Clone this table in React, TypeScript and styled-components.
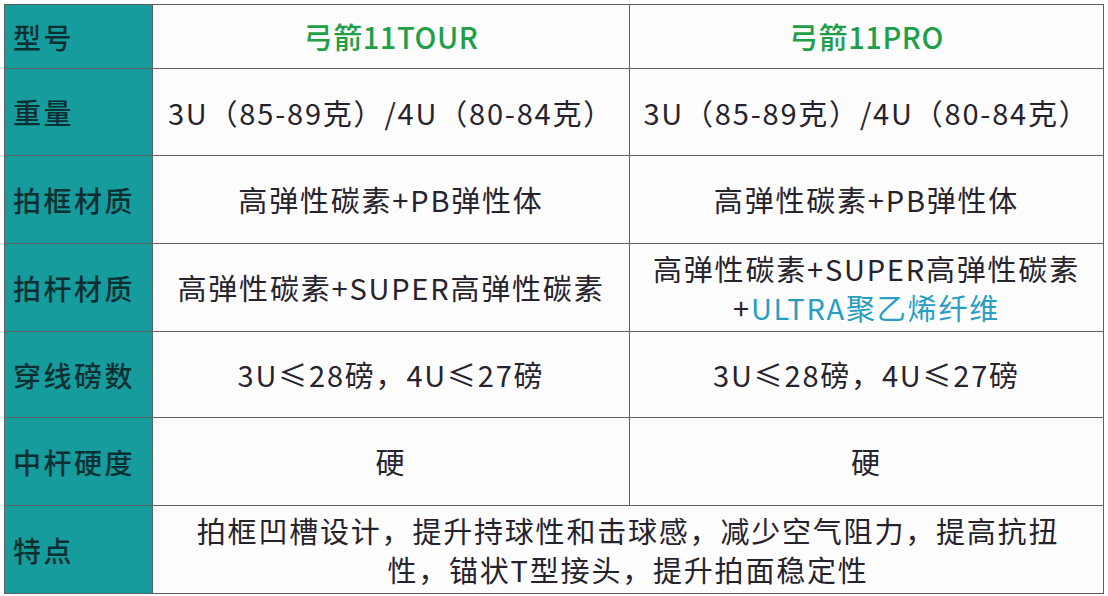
import React, { FC } from 'react'
import styled, { createGlobalStyle } from 'styled-components'

const GlobalStyle = createGlobalStyle`
    html, body { margin: 0; padding: 0; background: #ffffff; }
    body { font-family: "Noto Sans CJK SC", "Noto Sans", sans-serif; }
`

interface SpecRow {
    label: string;
    tour: React.ReactNode;
    pro?: React.ReactNode;
}

const Page = styled.div`
    width: 1108px;
    height: 596px;
    padding: 4px;
    box-sizing: border-box;
    background: #ffffff;
`

const Table = styled.div`
    display: grid;
    grid-template-columns: 147px 476px 473px;
    grid-template-rows: 63px 86px 87px 87px 85px 87px 87px;
    gap: 1px;
    padding: 1px;
    width: 1100px;
    height: 590px;
    box-sizing: border-box;
    background: #5e5e62;
`

const LabelCell = styled.div`
    display: flex;
    align-items: center;
    padding-left: 8px;
    background: #169c9c;
    color: #0c3032;
    font-size: 28px;
    font-weight: 500;
    letter-spacing: 2.5px;
`

const ValueCell = styled.div<{ $span?: boolean; $green?: boolean }>`
    display: flex;
    flex-direction: column;
    align-items: center;
    justify-content: center;
    grid-column: ${(p) => (p.$span ? 'span 2' : 'auto')};
    background: #fdfdfe;
    color: ${(p) => (p.$green ? '#1f9f48' : '#27232c')};
    font-size: 29px;
    font-weight: ${(p) => (p.$green ? 500 : 400)};
    letter-spacing: ${(p) => (p.$green ? '0.6px' : '1.8px')};
    line-height: 39px;
    text-align: center;
`

const Line = styled.div``

const Accent = styled.span`
    color: #2a9ec2;
`

const rows: SpecRow[] = [
    { label: '重量', tour: '3U（85-89克）/4U（80-84克）' },
    { label: '拍框材质', tour: '高弹性碳素+PB弹性体' },
    {
        label: '拍杆材质',
        tour: '高弹性碳素+SUPER高弹性碳素',
        pro: (
            <>
                <Line>高弹性碳素+SUPER高弹性碳素</Line>
                <Line>+<Accent>ULTRA聚乙烯纤维</Accent></Line>
            </>
        ),
    },
    { label: '穿线磅数', tour: '3U≤28磅，4U≤27磅' },
    { label: '中杆硬度', tour: '硬' },
]

const App: FC = () => (
    <>
        <GlobalStyle />
        <Page>
            <Table>
                <LabelCell>型号</LabelCell>
                <ValueCell $green>弓箭11TOUR</ValueCell>
                <ValueCell $green>弓箭11PRO</ValueCell>
                {rows.map((row) => (
                    <React.Fragment key={row.label}>
                        <LabelCell>{row.label}</LabelCell>
                        <ValueCell>{row.tour}</ValueCell>
                        <ValueCell>{row.pro ?? row.tour}</ValueCell>
                    </React.Fragment>
                ))}
                <LabelCell>特点</LabelCell>
                <ValueCell $span>
                    <Line>拍框凹槽设计，提升持球性和击球感，减少空气阻力，提高抗扭</Line>
                    <Line>性，锚状T型接头，提升拍面稳定性</Line>
                </ValueCell>
            </Table>
        </Page>
    </>
)

export default App
